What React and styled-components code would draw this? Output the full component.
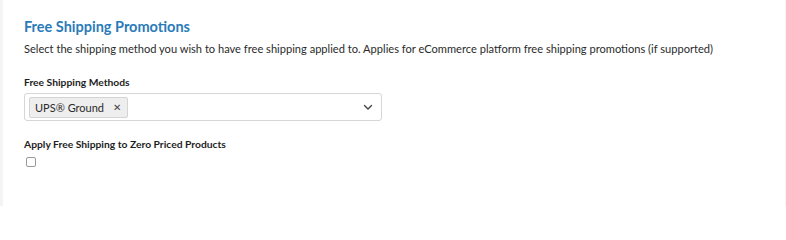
import React from "react";
import styled, { createGlobalStyle } from "styled-components";

const Global = createGlobalStyle`
  html, body { margin: 0; padding: 0; background: #fff; }
  body { font-family: Lato, "Open Sans", sans-serif; color: #333; }
  * { box-sizing: border-box; }
`;

const Frame = styled.div`
  display: flex;
  width: 786px;
  height: 206px;
  background: #f4f4f6;
`;

const Panel = styled.section`
  flex: 1;
  margin-left: 3px;
  margin-right: 1px;
  background: #fff;
  padding: 18px 0 0 21px;
  display: flex;
  flex-direction: column;
`;

const Title = styled.h2`
  margin: 0;
  font-size: 14.5px;
  font-weight: 700;
  color: #2b7bb9;
  line-height: 18px;
`;

const Desc = styled.p`
  margin: 6px 0 0;
  font-size: 11.1px;
  line-height: 14px;
  color: #2a2a2a;
`;

const Label = styled.label`
  display: block;
  margin-top: ${(p) => p.$top}px;
  font-size: 10.3px;
  font-weight: 700;
  line-height: 12px;
  color: #1e1e1e;
`;

const Select = styled.div`
  margin-top: 5px;
  width: 358px;
  height: 28px;
  border: 1px solid #d6d6d6;
  border-radius: 3px;
  display: flex;
  align-items: center;
  padding: 0 4px;
`;

const Tag = styled.span`
  display: inline-flex;
  align-items: center;
  height: 21px;
  padding: 0 6px 0 5px;
  background: #eeeeee;
  border: 1px solid #d4d4d4;
  border-radius: 2px;
  font-size: 11px;
  color: #2a2a2a;
`;

const Remove = styled.span`
  margin-left: 9px;
  font-size: 10px;
  color: #444;
`;

const Spacer = styled.div`
  flex: 1;
`;

const Chevron = styled.svg`
  width: 10px;
  height: 10px;
  margin-right: 4px;
`;

const Check = styled.span`
  display: block;
  margin: 7px 0 0 2px;
  width: 10px;
  height: 10px;
  border: 1px solid #9a9a9a;
  border-radius: 2px;
  background: #fff;
`;

export default function App() {
  return (
    <>
      <Global />
      <Frame>
        <Panel>
          <Title>Free Shipping Promotions</Title>
          <Desc>
            Select the shipping method you wish to have free shipping applied to. Applies for eCommerce platform free shipping promotions (if supported)
          </Desc>
          <Label $top={20}>Free Shipping Methods</Label>
          <Select>
            <Tag>
              UPS® Ground<Remove>✕</Remove>
            </Tag>
            <Spacer />
            <Chevron viewBox="0 0 10 10">
              <path d="M1.5 3.5 L5 7 L8.5 3.5" fill="none" stroke="#444" strokeWidth="1.4" strokeLinecap="round" strokeLinejoin="round" />
            </Chevron>
          </Select>
          <Label $top={17}>Apply Free Shipping to Zero Priced Products</Label>
          <Check />
        </Panel>
      </Frame>
    </>
  );
}
